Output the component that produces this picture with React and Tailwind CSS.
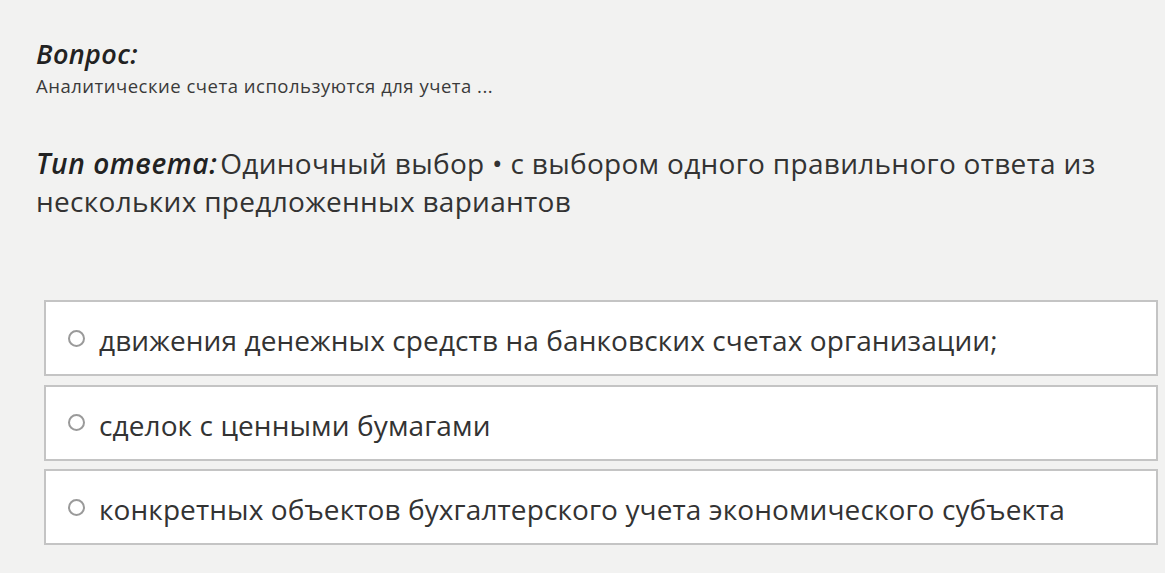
import React from 'react'

const options = [
  'движения денежных средств на банковских счетах организации;',
  'сделок с ценными бумагами',
  'конкретных объектов бухгалтерского учета экономического субъекта',
]

const App = () => {
  return (
    <div className="min-h-[573px] w-[1165px] bg-[#f2f2f1] text-[#2b2b2b] pt-[36px]" style={{ fontFamily: '"Open Sans", "Noto Sans", sans-serif' }}>
      <div className="pl-[36px] pr-[40px]">
        <h2 className="text-[27px] leading-[36px] font-semibold italic tracking-[0.4px] text-[#222]">Вопрос:</h2>
        <p className="mt-[2px] text-[18.5px] leading-[24px] tracking-[0.5px] text-[#3a3a3a]">Аналитические счета используются для учета ...</p>

        <p className="mt-[46px] text-[28px] leading-[38px] tracking-[0.3px] text-[#333]">
          <span className="font-semibold italic tracking-[0.6px] pr-[3px] text-[#222]">Тип ответа:</span>Одиночный выбор • с выбором одного правильного ответа из нескольких предложенных вариантов
        </p>
      </div>

      <div className="mt-[80px] ml-[44px] w-[1114px] flex flex-col gap-[8.5px]">
        {options.map(option => (
          <label key={option} className="h-[76px] bg-white border-2 border-[#c4c4c4] flex items-center pl-[22px] pt-[4px]">
            <span className="w-[17px] h-[17px] rounded-full border-2 border-[#9a9a9a] flex-shrink-0 mr-[14px] -mt-[4px]"></span>
            <span className="text-[28px] tracking-[0.1px] text-[#333]">{option}</span>
          </label>
        ))}
      </div>
    </div>
  )
}

export default App
